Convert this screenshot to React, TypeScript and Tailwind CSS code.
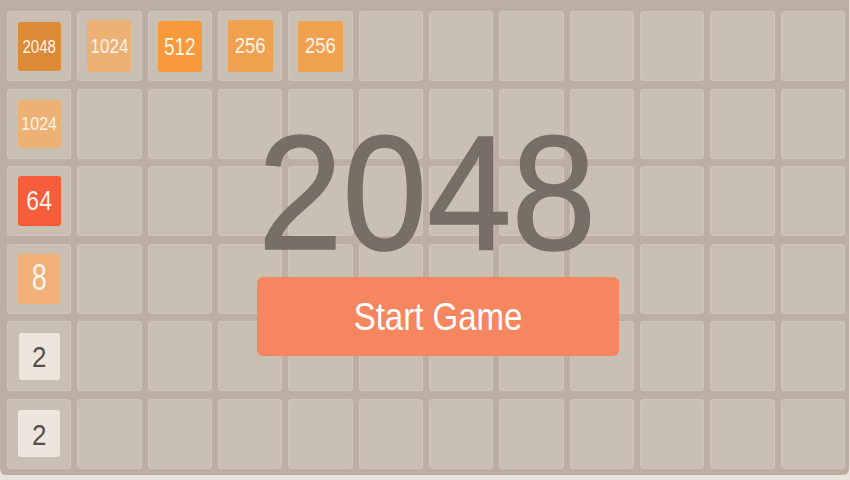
import React from "react";

type Tile = {
  value: string;
  bg: string;
  text: string;
  size: string;
  font: string;
};

const FONT = { fontFamily: '"Liberation Sans", Arial, Helvetica, sans-serif' };

// board cell index (row * 12 + col) -> tile shown there
const tiles: Record<number, Tile> = {
  0: { value: "2048", bg: "bg-[#dc8a35]", text: "text-[#fbf4ea]", size: "w-[43px] h-[49px]", font: "text-[15px] scale-y-[1.2]" },
  1: { value: "1024", bg: "bg-[#edb176]", text: "text-[#fbf4ea]", size: "w-[44px] h-[52px]", font: "text-[17px] scale-y-[1.2]" },
  2: { value: "512", bg: "bg-[#f69a3b]", text: "text-[#fbf4ea]", size: "w-[44px] h-[51px]", font: "text-[19px] scale-y-[1.25]" },
  3: { value: "256", bg: "bg-[#f0a150]", text: "text-[#fbf4ea]", size: "w-[45px] h-[52px]", font: "text-[18.5px] scale-y-[1.2]" },
  4: { value: "256", bg: "bg-[#f0a150]", text: "text-[#fbf4ea]", size: "w-[45px] h-[51px]", font: "text-[18.5px] scale-y-[1.2]" },
  12: { value: "1024", bg: "bg-[#edb176]", text: "text-[#fbf4ea]", size: "w-[43px] h-[48px]", font: "text-[16px] scale-y-[1.2]" },
  24: { value: "64", bg: "bg-[#f55d3b]", text: "text-[#fbf4ea]", size: "w-[43px] h-[50px]", font: "text-[23px] scale-y-[1.2]" },
  36: { value: "8", bg: "bg-[#f1b078]", text: "text-[#fbf4ea]", size: "w-[42px] h-[50px]", font: "text-[27px] scale-y-[1.35]" },
  48: { value: "2", bg: "bg-[#eee6dd]", text: "text-[#57504a]", size: "w-[41px] h-[47px]", font: "text-[26px] scale-y-[1.17]" },
  60: { value: "2", bg: "bg-[#eee6dd]", text: "text-[#57504a]", size: "w-[42px] h-[47px]", font: "text-[26px] scale-y-[1.17]" },
};

function Cell({ index }: { index: number }) {
  const tile = tiles[index];
  return (
    <div className="flex items-center justify-center rounded-[3px] border border-[#d0c5ba] bg-[#cabfb3]">
      {tile && (
        <div
          className={`flex items-center justify-center rounded-[3px] ${tile.bg} ${tile.size}`}
        >
          <span className={`inline-block leading-none ${tile.text} ${tile.font}`}>
            {tile.value}
          </span>
        </div>
      )}
    </div>
  );
}

export default function App() {
  const cells = Array.from({ length: 72 }, (_, i) => i);
  return (
    <div className="h-[480px] w-[850px] overflow-hidden bg-[#e9e3dc]" style={FONT}>
      <div className="relative h-[475px] w-[849px] rounded-b-[6px] bg-[#bcaea2]">
        <div className="grid grid-cols-12 grid-rows-[repeat(6,70px)] gap-x-[6px] gap-y-[7.5px] pb-[6px] pl-[7px] pr-[4px] pt-[11px]">
          {cells.map((i) => (
            <Cell key={i} index={i} />
          ))}
        </div>

        <div className="absolute inset-0 flex flex-col">
          <div className="mt-[117px] flex h-[149px] items-center justify-center pl-[5px]">
            <span className="inline-block scale-y-[1.08] text-[152px] leading-none text-[#776e65] [-webkit-text-stroke:1.5px_#776e65]">
              2048
            </span>
          </div>
          <button className="ml-[257px] mt-[11px] flex h-[79px] w-[362px] items-center justify-center rounded-[6px] bg-[#f6865f]">
            <span className="inline-block scale-y-[1.15] text-[33px] leading-none text-white">
              Start Game
            </span>
          </button>
        </div>
      </div>
    </div>
  );
}
